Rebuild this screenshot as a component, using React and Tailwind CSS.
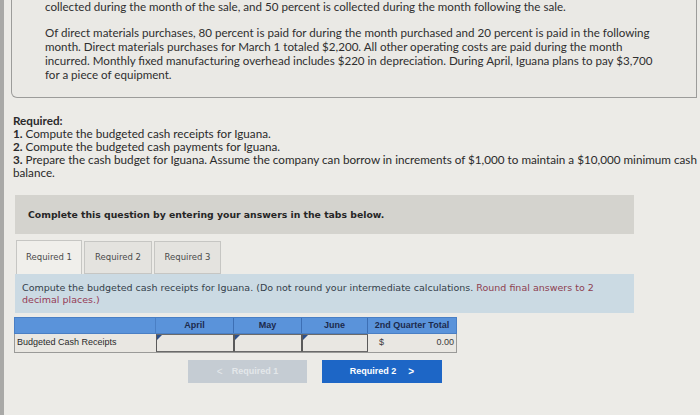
import React from 'react';

const InputCell = ({ w }) => (
	<div className={`relative h-full border-r border-[#5a5a5a] border-l border-l-[#5a5a5a] border-y border-y-[#6a6a6a] bg-[#e9e7e2] ${w}`}>
		<span className="absolute left-0 top-0 w-0 h-0 border-t-[5px] border-t-[#2c4f8a] border-r-[5px] border-r-transparent"></span>
	</div>
);

const App = () => {
	return (
		<div className="w-[700px] h-[415px] overflow-hidden bg-[#ecebe7] flex">
			<div className="w-[4px] h-full bg-[#a9a9a7] shrink-0"></div>
			<div className="flex-1 flex flex-col">
				{/* problem text box */}
				<div className="ml-[7px] mr-[3px] h-[98px] border-l border-r border-b border-[#9c9c9a] rounded-bl-md bg-[#eae9e5] shrink-0 pl-[33px] font-['Lato',sans-serif] text-[11.6px] leading-[14px] text-[#2f2f2f]">
					<p className="whitespace-nowrap">collected during the month of the sale, and 50 percent is collected during the month following the sale.</p>
					<p className="mt-[12px] whitespace-nowrap">
						Of direct materials purchases, 80 percent is paid for during the month purchased and 20 percent is paid in the following<br />
						month. Direct materials purchases for March 1 totaled $2,200. All other operating costs are paid during the month<br />
						incurred. Monthly fixed manufacturing overhead includes $220 in depreciation. During April, Iguana plans to pay $3,700<br />
						for a piece of equipment.
					</p>
				</div>

				{/* required list */}
				<div className="mt-[16px] ml-[9px] font-['Lato',sans-serif] text-[11.7px] leading-[13px] text-[#2a2a2a]">
					<p className="font-bold">Required:</p>
					<p><span className="font-bold">1.</span> Compute the budgeted cash receipts for Iguana.</p>
					<p><span className="font-bold">2.</span> Compute the budgeted cash payments for Iguana.</p>
					<p className="whitespace-nowrap"><span className="font-bold">3.</span> Prepare the cash budget for Iguana. Assume the company can borrow in increments of $1,000 to maintain a $10,000 minimum cash</p>
					<p>balance.</p>
				</div>

				{/* question area */}
				<div className="mt-[16px] ml-[11px] w-[619px] font-['DejaVu_Sans',sans-serif]">
					<div className="h-[39px] bg-[#d4d3ce] flex items-center pl-[13px]">
						<span className="text-[9.3px] font-bold text-[#262626]">Complete this question by entering your answers in the tabs below.</span>
					</div>

					<div className="mt-[6px] flex items-end h-[34px] pl-[1px] gap-[2px]">
						<div className="h-[34px] w-[66px] bg-[#f0efeb] border border-b-0 border-[#c6c6c3] flex items-center justify-center text-[8.5px] text-[#4a4a4a]">Required 1</div>
						<div className="h-[33px] w-[68px] bg-[#e4e3df] border border-[#c6c6c3] flex items-center justify-center text-[8.5px] text-[#4a4a4a]">Required 2</div>
						<div className="h-[33px] w-[67px] bg-[#e4e3df] border border-[#c6c6c3] flex items-center justify-center text-[8.5px] text-[#4a4a4a]">Required 3</div>
					</div>

					<div className="h-[39px] bg-[#cbdae3] pl-[7px] pt-[8px] text-[9.5px] leading-[12px] text-[#34404a]">
						<p className="whitespace-nowrap">Compute the budgeted cash receipts for Iguana. (Do not round your intermediate calculations. <span className="text-[#8e4050]">Round final answers to 2</span></p>
						<p className="text-[#963a56]">decimal places.)</p>
					</div>
				</div>

				{/* table */}
				<div className="mt-[4px] ml-[10px] w-[443px] font-['Liberation_Sans',sans-serif] text-[9px]">
					<div className="flex h-[17px] bg-[#5a93da] border border-[#4a7fc4] text-[#1c2a4c] font-bold">
						<div className="w-[141px] border-r border-[#4a7fc4]"></div>
						<div className="w-[78px] border-r border-[#3d6fb4] flex items-center justify-center">April</div>
						<div className="w-[68px] border-r border-[#3d6fb4] flex items-center justify-center">May</div>
						<div className="w-[66px] border-r border-[#3d6fb4] flex items-center justify-center">June</div>
						<div className="flex-1 flex items-center justify-center">2nd Quarter Total</div>
					</div>
					<div className="flex h-[19px] bg-[#e9e7e2] border border-t-0 border-[#9a9a98] text-[#2a2a2a]">
						<div className="w-[141px] flex items-center pl-[2px]">Budgeted Cash Receipts</div>
						<InputCell w="w-[78px]" />
						<InputCell w="w-[68px]" />
						<InputCell w="w-[66px]" />
						<div className="flex-1 flex items-center justify-between pl-[11px] pr-[2px] text-[#3a3a3a]">
							<span>$</span>
							<span>0.00</span>
						</div>
					</div>
				</div>

				{/* nav buttons */}
				<div className="mt-[7px] ml-[184px] flex gap-[15px] font-['Liberation_Sans',sans-serif] text-[9px] font-bold">
					<div className="w-[119px] h-[23px] bg-[#c5ccd3] flex items-center justify-center gap-[9px] text-[#e3e7ea]">
						<span className="text-[10px] font-normal">&lt;</span>
						<span>Required 1</span>
					</div>
					<div className="w-[120px] h-[23px] bg-[#1d66c6] flex items-center justify-center gap-[12px] text-white">
						<span>Required 2</span>
						<span className="text-[10px]">&gt;</span>
					</div>
				</div>
			</div>
		</div>
	);
};

export default App;
